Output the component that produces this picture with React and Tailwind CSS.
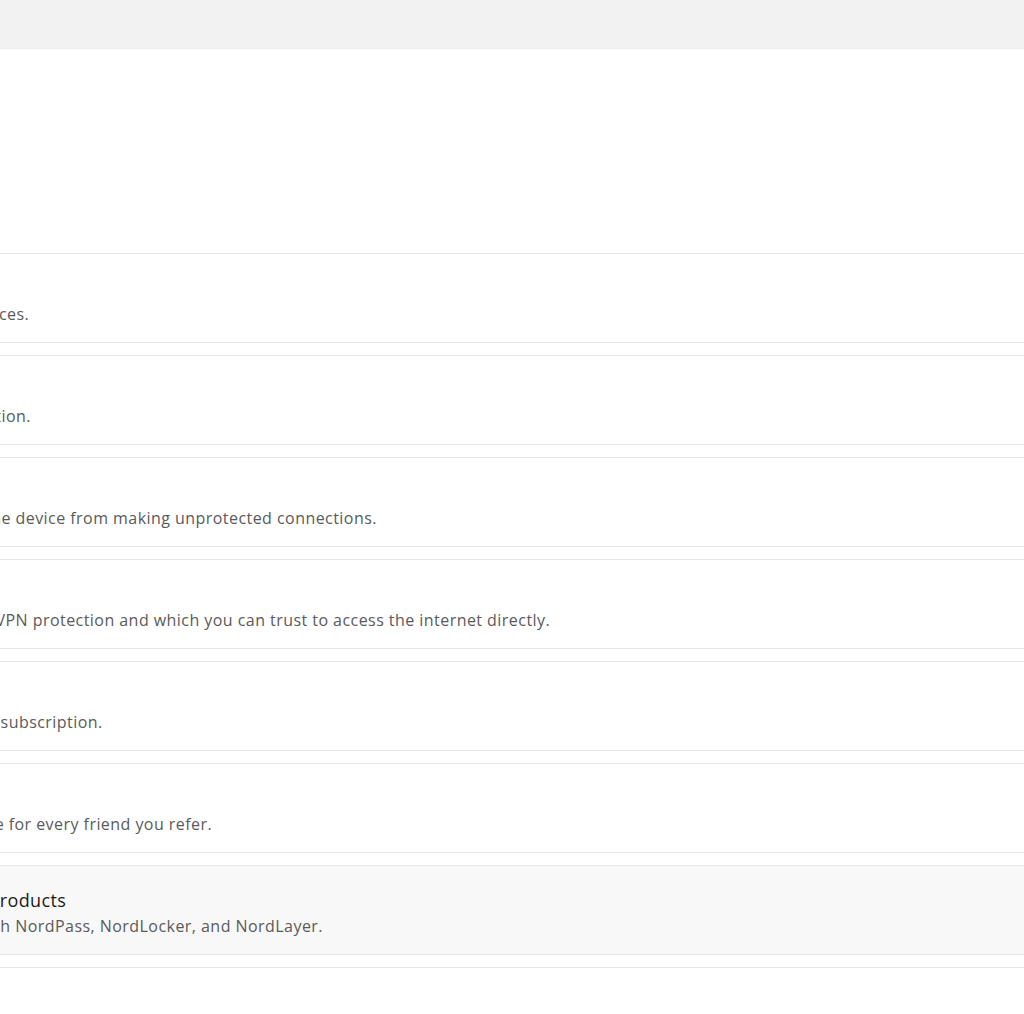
import React from "react";

const rows = [
  { title: "Meshnet", desc: "Access your remote devices." },
  { title: "Connection", desc: "Set up your VPN connection." },
  { title: "Kill Switch", desc: "Stop traffic to prevent the device from making unprotected connections." },
  { title: "Split tunneling", desc: "Choose which apps use VPN protection and which you can trust to access the internet directly." },
  { title: "Account", desc: "Check your account and subscription." },
  { title: "Refer a friend", desc: "Earn up to 3 months free for every friend you refer." },
  { title: "Discover other Nord Products", desc: "Expand your security with NordPass, NordLocker, and NordLayer.", muted: true },
  { title: "Help center", desc: "Find answers to common questions." },
];

function Row({ title, desc, muted }) {
  return (
    <div
      className={`border-y border-[#e8e8e8] pl-[30px] pr-6 pt-[20px] pb-[16px] whitespace-nowrap ${
        muted ? "bg-[#f8f8f8]" : "bg-white"
      }`}
    >
      <div className="text-[18px] leading-[28px] tracking-[0.35px] text-[#1b1b1b]">{title}</div>
      <div className="text-[16px] leading-[24px] tracking-[0.45px] text-[#5a5a5a]">{desc}</div>
    </div>
  );
}

export default function App() {
  return (
    <div
      className="h-[1014px] w-full overflow-hidden bg-white"
      style={{ fontFamily: '"Open Sans", "Noto Sans", sans-serif' }}
    >
      <div className="h-[49px] border-b border-[#ececec] bg-[#f2f2f2]" />
      <div className="-ml-[223px] w-[1400px]">
        <div className="h-[204px]" />
        <div className="flex flex-col gap-[12px]">
          {rows.map((r) => (
            <Row key={r.title} {...r} />
          ))}
        </div>
      </div>
    </div>
  );
}
